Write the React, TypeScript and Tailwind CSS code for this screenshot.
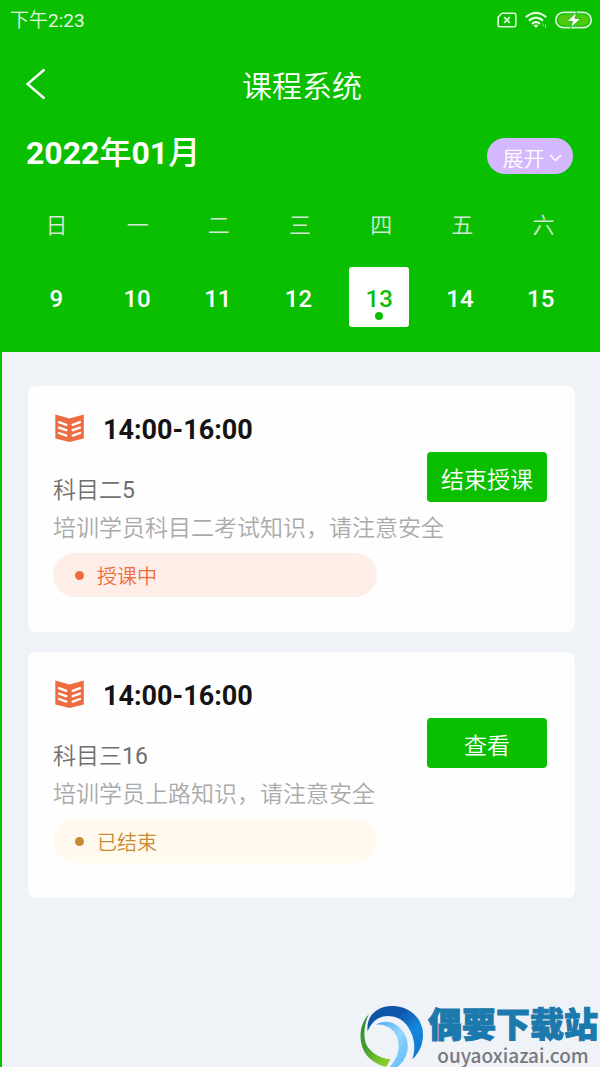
import { useState } from 'react';

interface Lesson {
  id: number;
  time: string;
  subject: string;
  count: number;
  description: string;
  status: 'active' | 'finished';
  statusText: string;
  action: string;
}

const weekdays = ['日', '一', '二', '三', '四', '五', '六'];
const dates = [9, 10, 11, 12, 13, 14, 15];

const lessons: Lesson[] = [
  {
    id: 1,
    time: '14:00-16:00',
    subject: '科目二',
    count: 5,
    description: '培训学员科目二考试知识，请注意安全',
    status: 'active',
    statusText: '授课中',
    action: '结束授课',
  },
  {
    id: 2,
    time: '14:00-16:00',
    subject: '科目三',
    count: 16,
    description: '培训学员上路知识，请注意安全',
    status: 'finished',
    statusText: '已结束',
    action: '查看',
  },
];

const StatusIcons = () => (
  <div className="flex items-center gap-2">
    {/* No SIM */}
    <svg className="w-5 h-4" viewBox="0 0 20 16" fill="none" stroke="#e3f8e1">
      <path d="M5 1.2H17.2Q18.8 1.2 18.8 2.8V13.2Q18.8 14.8 17.2 14.8H2.8Q1.2 14.8 1.2 13.2V5Z" strokeWidth="1.6" />
      <path d="M7.2 5.2L12.8 10.8M12.8 5.2L7.2 10.8" strokeWidth="1.8" />
    </svg>
    {/* Wifi */}
    <svg className="w-[22px] h-[18px]" viewBox="0 0 22 18" fill="none" stroke="#e3f8e1" strokeWidth="2.2">
      <path d="M0.8 6.2Q11 -2.6 21.2 6.2" />
      <path d="M4 9.6Q11 3.6 18 9.6" />
      <path d="M7 12.8Q11 9.4 15 12.8" />
      <path d="M8.6 14.4Q11 12.4 13.4 14.4L11 17Z" fill="#e3f8e1" stroke="none" />
      <path d="M18 12.5V15.5M20.5 13V17" strokeWidth="1" opacity="0.6" />
    </svg>
    {/* Battery */}
    <svg className="w-[37px] h-[18px]" viewBox="0 0 37 18" fill="none">
      <rect x="0.8" y="1.3" width="35.4" height="15.4" rx="7.7" stroke="#d5f3d1" strokeWidth="1.7" />
      <rect x="3" y="3.5" width="31" height="11" rx="5.5" fill="#4fc90f" />
      <path d="M21.5 1L12 10.5H17.5L15.5 17L26 7.5H20Z" fill="#fff" stroke="#0abf00" strokeWidth="0.8" />
    </svg>
  </div>
);

const BookIcon = () => (
  <svg className="w-[30px] h-8 shrink-0" viewBox="0 0 30 32">
    <path d="M0.3 0.5L14.5 4.5L28.8 0.5V24.5L14.5 28L0.3 24.5Z" fill="#ee6d40" />
    <path
      d="M4 8.2L11.3 10.8M4 13.6L11.3 16.2M4 19L11.3 21.6M25 8.2L17.7 10.8M25 13.6L17.7 16.2M25 19L17.7 21.6"
      stroke="#fff"
      strokeWidth="2.3"
      strokeLinecap="round"
    />
  </svg>
);

const LessonCard = ({ lesson }: { lesson: Lesson }) => {
  const isActive = lesson.status === 'active';

  return (
    <article className="rounded-lg bg-[#fefefe] pt-[26px] pr-7 pb-[35px] pl-[25px]">
      <div className="flex h-9 items-center gap-[18px] pl-[2px]">
        <BookIcon />
        <h2 className="text-[27px] leading-9 font-bold text-[#141414]">{lesson.time}</h2>
      </div>

      <div className="mt-1 flex h-[58px] items-start justify-between">
        <h3 className="self-end text-[23px] leading-[38px] font-[350] text-[#6f6f6f]">
          {lesson.subject}
          <span className="font-normal">{lesson.count}</span>
        </h3>
        <button type="button" className="h-[50px] w-[120px] rounded-[4px] bg-[#0abf00] pt-2 text-[23px] font-[350] text-white">
          {lesson.action}
        </button>
      </div>
      <p className="text-[23px] leading-[38px] font-[350] text-[#aaa]">{lesson.description}</p>

      {/* Status */}
      <div
        className={`mt-[5px] flex h-11 max-w-[324px] items-center gap-[13px] rounded-full pl-[22px] text-[20px] font-[350] ${
          isActive ? 'bg-[#ffede8] text-[#ee6d40]' : 'bg-[#fff9ee] text-[#c68c35]'
        }`}
      >
        <span className="size-[9px] rounded-full bg-current" />
        <span className="pt-1">{lesson.statusText}</span>
      </div>
    </article>
  );
};

const SiteMark = () => (
  <footer className="mt-auto flex items-end justify-end gap-1 pr-[2px]">
    <svg className="h-[62px] w-[65px]" viewBox="30 45 195 186">
      <defs>
        <linearGradient id="blue" x1="0" y1="0" x2="1" y2="1">
          <stop offset="0" stopColor="#0d55a6" />
          <stop offset="0.35" stopColor="#0d55a8" />
          <stop offset="0.65" stopColor="#1687df" />
          <stop offset="1" stopColor="#0876c8" />
        </linearGradient>
        <linearGradient id="sky" x1="0" y1="0" x2="1" y2="1">
          <stop offset="0" stopColor="#48a9ed" />
          <stop offset="0.5" stopColor="#94d7ff" />
          <stop offset="1" stopColor="#58b6f5" />
        </linearGradient>
        <linearGradient id="green" x1="0" y1="0" x2="0.6" y2="1">
          <stop offset="0" stopColor="#258b36" />
          <stop offset="0.55" stopColor="#459c2b" />
          <stop offset="1" stopColor="#82cb2b" />
        </linearGradient>
      </defs>
      <path d="M56 124C50 78 84 47 132 48C185 49 222 88 222 133C222 165 210 190 190 208C199 176 198 152 184 123C170 94 147 78 116 78C87 78 67 97 56 124Z" fill="url(#blue)" />
      <path d="M80 104C102 91 130 93 149 110C169 127 178 151 176 174C174 198 162 218 145 231H122C143 208 152 184 148 157C144 126 119 101 80 104Z" fill="url(#sky)" />
      <path d="M60 72C39 94 31 126 36 156C43 200 78 224 112 230L124 208C92 204 63 188 51 161C42 137 46 99 60 72Z" fill="url(#green)" />
    </svg>
    <div className="text-center">
      <p className="text-[34px] leading-9 font-black text-[#1b79ad] [-webkit-text-stroke:1px_#1b79ad]">偶要下载站</p>
      <p className="font-['Noto_Sans_CJK_SC','Noto_Sans',sans-serif] text-[19px] leading-6 font-medium text-[#777a7e]">
        ouyaoxiazai.com
      </p>
    </div>
  </footer>
);

export default function App() {
  const [selected, setSelected] = useState(13);

  return (
    <div className="flex min-h-screen flex-col bg-[#0abf00] font-[Roboto,'Noto_Sans_CJK_SC',sans-serif]">
      <header className="pb-[25px] text-white">
        {/* Status bar */}
        <div className="flex h-10 items-center justify-between pr-2 pl-[10px]">
          <span className="pt-[2px] text-[19px] font-[350] text-[#e3f8e1]">
            下午<span className="font-normal">2:23</span>
          </span>
          <StatusIcons />
        </div>

        {/* Title */}
        <nav className="grid h-[88px] grid-cols-[1fr_auto_1fr] items-center pl-[26px]">
          <button type="button" aria-label="返回" className="w-5">
            <svg className="h-8 w-5" viewBox="0 0 20 32" fill="none" stroke="currentColor" strokeWidth="2.4">
              <path d="M18.5 1.5L1.5 16L18.5 30.5" />
            </svg>
          </button>
          <h1 className="pt-1 pr-[22px] text-[30px] font-[350]">课程系统</h1>
        </nav>

        {/* Month */}
        <div className="flex h-[50px] items-center justify-between pr-[27px] pl-[26px]">
          <p className="text-[32px] leading-10 font-bold">
            2022<span className="font-medium">年</span>01<span className="font-medium">月</span>
          </p>
          <button
            type="button"
            className="mt-[6px] flex h-9 w-[86px] items-center justify-center gap-1 rounded-full bg-[#d4b8fd] pt-1 pl-1 text-[21px] font-[350]"
          >
            <span className="pt-1">展开</span>
            <svg className="h-2 w-[13px]" viewBox="0 0 13 8" fill="none" stroke="currentColor" strokeWidth="1.5">
              <path d="M1 1L6.5 6.5L12 1" />
            </svg>
          </button>
        </div>

        {/* Week */}
        <div className="mt-[29px] grid grid-cols-7 px-4 text-center text-[22px] leading-[38px] font-[350] text-[#d5e8d8]">
          {weekdays.map((day) => (
            <span key={day}>{day}</span>
          ))}
        </div>
        <div className="mt-[22px] grid grid-cols-7 justify-items-center pr-[19px] pl-4">
          {dates.map((date) => (
            <button
              key={date}
              type="button"
              onClick={() => setSelected(date)}
              className={`flex size-[60px] flex-col items-center rounded-[3px] pt-4 text-[24px] leading-8 font-medium ${
                date === selected ? 'bg-white text-[#0abf00]' : ''
              }`}
            >
              {date}
              {date === selected && <span className="-mt-[3px] size-2 shrink-0 rounded-full bg-current" />}
            </button>
          ))}
        </div>
      </header>

      <main className="ml-[2px] flex grow flex-col bg-[#eff3f8] pt-[34px]">
        <div className="mb-5 flex flex-col gap-5 pr-[25px] pl-[26px]">
          {lessons.map((lesson) => (
            <LessonCard key={lesson.id} lesson={lesson} />
          ))}
        </div>
        <SiteMark />
      </main>
    </div>
  );
}
